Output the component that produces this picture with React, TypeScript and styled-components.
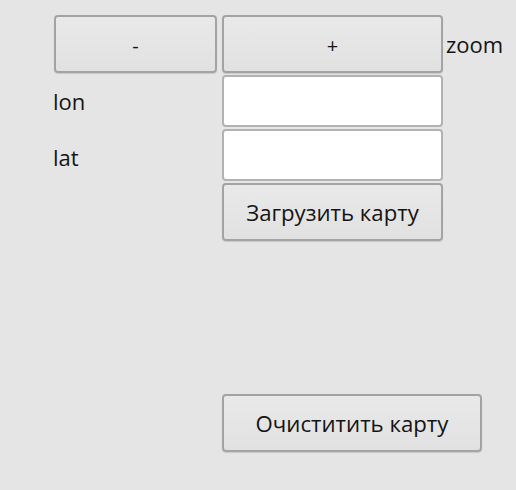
import React from 'react';
import styled, { createGlobalStyle } from 'styled-components';

const GlobalStyle = createGlobalStyle`
  html, body {
    margin: 0;
    padding: 0;
    background: #e5e5e5;
  }
  body {
    font-family: 'Open Sans', 'Noto Sans', sans-serif;
    color: #141414;
  }
`;

const Window = styled.div`
  width: 516px;
  height: 490px;
  box-sizing: border-box;
  padding: 15px 0 0 54px;
  background: #e5e5e5;
  overflow: hidden;
`;

const Form = styled.div`
  display: grid;
  grid-template-columns: 163px 221px auto;
  grid-template-rows: 58px 52px 52px 58px;
  column-gap: 5px;
  row-gap: 2px;
`;

const Button = styled.button<{ wide?: boolean }>`
  box-sizing: border-box;
  height: 58px;
  width: ${({ wide }) => (wide ? '260px' : '100%')};
  margin: 0;
  padding: 0;
  border: 2px solid #a3a3a3;
  border-radius: 4px;
  background: linear-gradient(#e9e9e9, #e1e1e1);
  box-shadow: 0 1px 1px rgba(0, 0, 0, 0.12);
  font-family: inherit;
  font-size: 22.2px;
  color: #141414;
  cursor: pointer;
`;

const Symbol = styled.span`
  font-size: 20px;
`;

const Input = styled.input`
  box-sizing: border-box;
  width: 100%;
  height: 52px;
  margin: 0;
  border: 2px solid #b2b2b2;
  border-radius: 4px;
  background: #ffffff;
  font-family: inherit;
  font-size: 22px;
  outline: none;
`;

const Label = styled.div<{ shift?: number; drop?: number }>`
  display: flex;
  align-items: center;
  margin-left: ${({ shift }) => shift ?? 0}px;
  padding-top: ${({ drop }) => drop ?? 0}px;
  font-size: 22px;
`;

const Spacer = styled.div``;

const ClearCell = styled.div`
  grid-column: 2 / span 2;
  margin-top: 151px;
`;

export default function App() {
  return (
    <>
      <GlobalStyle />
      <Window>
        <Form>
          <Button><Symbol>-</Symbol></Button>
          <Button><Symbol>+</Symbol></Button>
          <Label shift={-2}>zoom</Label>

          <Label shift={-1}>lon</Label>
          <Input />
          <Spacer />

          <Label shift={-1} drop={4}>lat</Label>
          <Input />
          <Spacer />

          <Spacer />
          <Button>Загрузить карту</Button>
          <Spacer />

          <Spacer />
          <ClearCell>
            <Button wide>Очиститить карту</Button>
          </ClearCell>
        </Form>
      </Window>
    </>
  );
}
